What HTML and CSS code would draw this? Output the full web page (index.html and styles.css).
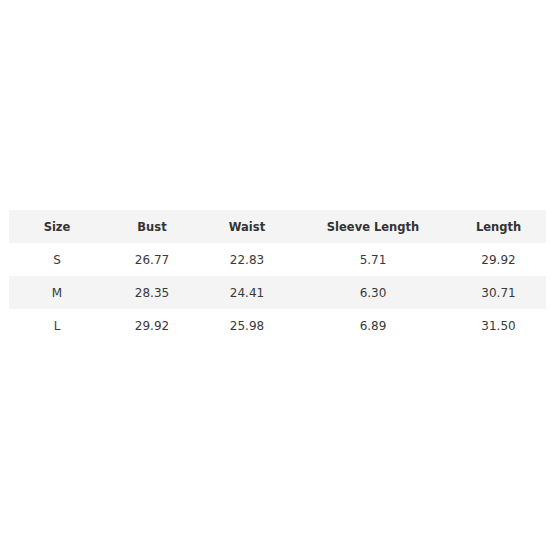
FILE: index.html
```html
<!DOCTYPE html>
<html>
<head>
<meta charset="utf-8">
<link rel="stylesheet" href="styles.css">
</head>
<body>
<div class="page">
  <table class="size-table">
    <colgroup>
      <col class="c1"><col class="c2"><col class="c3"><col class="c4"><col class="c5">
    </colgroup>
    <thead>
      <tr class="shade"><th>Size</th><th>Bust</th><th>Waist</th><th>Sleeve Length</th><th>Length</th></tr>
    </thead>
    <tbody>
      <tr><td>S</td><td>26.77</td><td>22.83</td><td>5.71</td><td>29.92</td></tr>
      <tr class="shade"><td>M</td><td>28.35</td><td>24.41</td><td>6.30</td><td>30.71</td></tr>
      <tr><td>L</td><td>29.92</td><td>25.98</td><td>6.89</td><td>31.50</td></tr>
    </tbody>
  </table>
</div>
</body>
</html>
```
FILE: styles.css
```css
html, body {
  margin: 0;
  padding: 0;
  background: #ffffff;
}
.page {
  width: 555px;
  height: 555px;
  padding: 210px 9px 0 9px;
  box-sizing: border-box;
}
.size-table {
  width: 537px;
  border-collapse: collapse;
  table-layout: fixed;
  font-family: "DejaVu Sans", Verdana, sans-serif;
  font-size: 12px;
  color: #3a3a3a;
}
.c1 { width: 96px; }
.c2 { width: 94px; }
.c3 { width: 96px; }
.c4 { width: 156px; }
.c5 { width: 95px; }
.size-table th,
.size-table td {
  height: 33px;
  padding: 0;
  text-align: center;
  vertical-align: middle;
}
.size-table th {
  font-weight: bold;
  font-size: 11.5px;
  color: #333333;
}
.size-table td {
  font-weight: normal;
}
.shade {
  background: #f4f4f4;
}
```
